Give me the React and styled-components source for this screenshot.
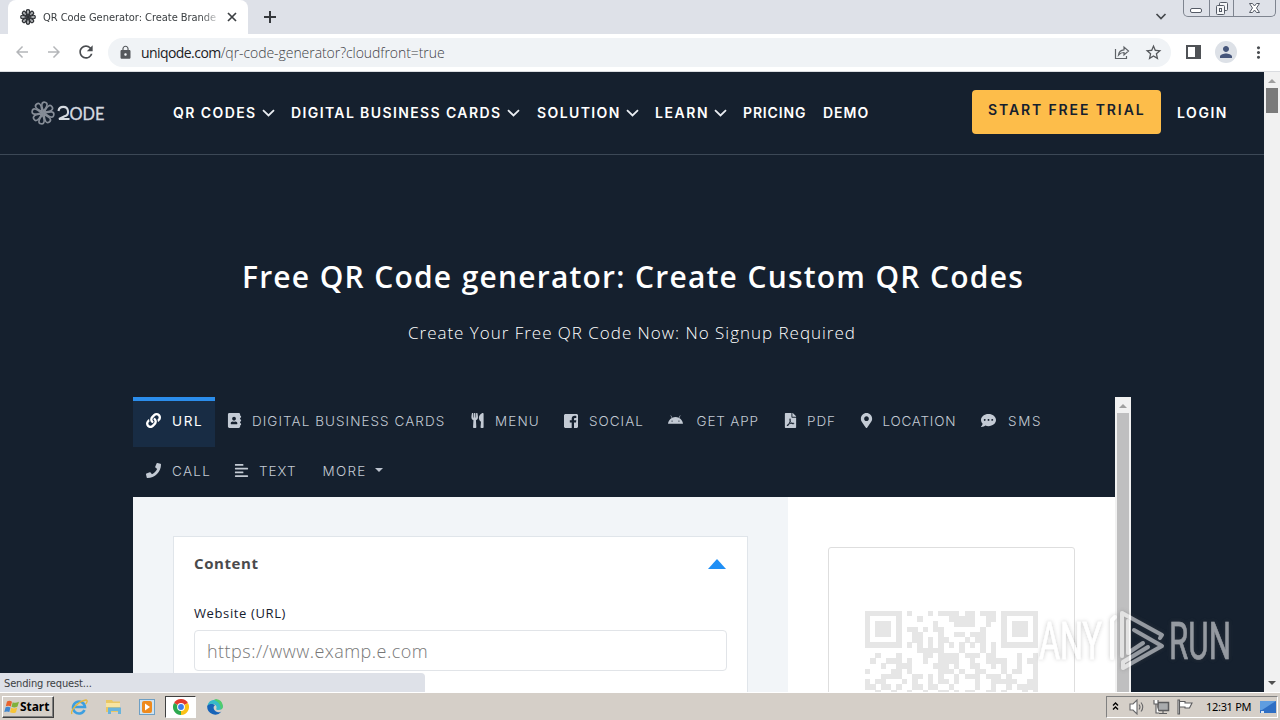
import React from "react";
import styled, { createGlobalStyle, css } from "styled-components";
import {
  FaLink, FaAddressBook, FaUtensils, FaAndroid, FaFilePdf,
  FaMapMarkerAlt, FaCommentDots, FaPhone, FaAlignLeft,
} from "react-icons/fa";
import { MdArrowBack, MdArrowForward, MdRefresh, MdLock, MdStarBorder, MdMoreVert, MdPerson } from "react-icons/md";

const navy = "#15202e";
const tahoma = `"DejaVu Sans Condensed", "DejaVu Sans", sans-serif`;

const Global = createGlobalStyle`
  * { box-sizing: border-box; }
  html, body { margin: 0; overflow: hidden; background: #fff; }
  svg { display: block; flex: none; }
`;

const Screen = styled.div`
  position: relative;
  width: 1280px;
  height: 720px;
  display: flex;
  flex-direction: column;
  overflow: hidden;
  font-family: Inter, sans-serif;
  white-space: nowrap;
`;

/* ---------- browser chrome ---------- */

const TabStrip = styled.div`
  height: 34px;
  flex: none;
  display: flex;
  align-items: flex-start;
  padding-left: 8px;
  background: #dee1e8;
`;

const BrowserTab = styled.div`
  width: 240px;
  height: 34px;
  display: flex;
  align-items: center;
  padding: 0 10px 0 12px;
  background: #fff;
  border-radius: 8px 8px 0 0;
`;

const TabTitle = styled.div`
  width: 176px;
  margin: 1px 8px 0 7px;
  font-family: ${tahoma};
  font-stretch: condensed;
  font-size: 11px;
  line-height: 16px;
  letter-spacing: -0.04px;
  color: #3c4043;
  mask-image: linear-gradient(to right, #000 90%, rgba(0, 0, 0, 0.1) 100%);
`;

const NewTab = styled.div`
  padding: 11px 0 0 16px;
`;

const TabSearch = styled.div`
  margin-left: auto;
  padding: 12px 16px 0 0;
`;

const WindowButtons = styled.div`
  display: flex;
  width: 93px;
  height: 17px;
  margin-right: 4px;
  border: 1px solid #7e848f;
  border-top: 0;
  border-radius: 0 0 5px 5px;
`;

const WindowButton = styled.div`
  width: ${(p) => p.$width}px;
  display: flex;
  justify-content: center;
  border-left: ${(p) => (p.$divided ? "1px solid #7e848f" : "0")};
`;

const Toolbar = styled.div`
  height: 38px;
  flex: none;
  display: flex;
  align-items: center;
  padding: 0 12px 1px 13px;
  background: #fff;
  border-bottom: 1px solid #dadce0;
`;

const NavButtons = styled.div`
  display: flex;
  align-items: center;
  gap: 14px;
  width: 95px;
`;

const NavGlyph = styled.span`
  color: ${(p) => (p.$active ? "#4a4d51" : "#b4b6b9")};
  margin-left: ${(p) => (p.$active ? -1 : 0)}px;
  font-size: 18px;
`;

const AddressBar = styled.div`
  width: 1064px;
  height: 29px;
  display: flex;
  align-items: center;
  padding: 0 8px 0 10px;
  border-radius: 15px;
  background: #f0f3f6;
  color: #55585c;
`;

const Url = styled.div`
  margin: 2px 0 0 8px;
  font: 400 14px/20px "Open Sans", sans-serif;
  letter-spacing: -0.56px;
  color: #202124;
`;

const UrlPath = styled.span`
  font-weight: 300;
  letter-spacing: -0.06px;
  color: #3f4246;
`;

const BarActions = styled.div`
  margin-left: auto;
  display: flex;
  align-items: center;
  gap: 14px;
`;

const ToolbarActions = styled.div`
  display: flex;
  align-items: center;
  margin-left: 15px;
  color: #4a4d51;
`;

const Avatar = styled.div`
  width: 22px;
  height: 22px;
  margin: 0 12px 0 14px;
  display: grid;
  place-items: center;
  border-radius: 50%;
  background: #dde1e7;
  color: #45557a;
  font-size: 18px;
`;

/* ---------- page ---------- */

const Viewport = styled.div`
  height: 620px;
  flex: none;
  display: flex;
`;

const Page = styled.main`
  width: 1264px;
  height: 620px;
  overflow: hidden;
  background: ${navy};
  color: #fff;
`;

const Scrollbar = styled.div`
  width: 16px;
  display: flex;
  flex-direction: column;
  align-items: center;
  background: #f1f1f1;
`;

const ScrollArrow = styled.div`
  width: 0;
  height: 0;
  border: 4px solid transparent;
  ${(p) =>
    p.$down
      ? css`border-top: 4px solid #505050; border-bottom: 0; margin: auto 0 7px;`
      : css`border-bottom: 4px solid #a0a0a0; border-top: 0; margin: 7px 0 5px;`}
`;

const ScrollThumb = styled.div`
  width: 12px;
  height: ${(p) => p.$height};
  background: ${(p) => p.$color};
`;

const Header = styled.header`
  height: 83px;
  display: flex;
  align-items: center;
  padding: 0 37px 2px 31px;
  border-bottom: 1px solid #3c4856;
`;

const Logo = styled.div`
  width: 142px;
  padding-top: 1px;
`;

const Menu = styled.nav`
  display: flex;
`;

const MenuLink = styled.a`
  width: ${(p) => p.$width}px;
  display: flex;
  align-items: center;
  gap: ${(p) => 6.5 - p.$spacing}px;
  padding-top: 2px;
  font-weight: 600;
  font-size: 14px;
  line-height: 20px;
  letter-spacing: ${(p) => p.$spacing}px;
`;

const Trial = styled.a`
  width: 189px;
  height: 44px;
  margin-left: auto;
  padding-left: 16px;
  border-radius: 4px;
  background: #fdbd4a;
  color: ${navy};
  font-weight: 600;
  font-size: 14px;
  line-height: 40px;
  letter-spacing: 1.88px;
`;

const Login = styled(MenuLink)`
  margin-left: 16px;
`;

const Title = styled.h1`
  margin: 101px 0 0;
  padding-left: 242px;
  font: 600 30px/42px "Open Sans", sans-serif;
  letter-spacing: 1.2px;
  word-spacing: 0.4px;
`;

const Subtitle = styled.p`
  margin: 23px 0 0;
  padding-left: 408px;
  font: 300 17px/24px "Open Sans", sans-serif;
  letter-spacing: 0.98px;
`;

const Frame = styled.section`
  width: 998px;
  height: 295px;
  margin: 52px 0 0 133px;
  display: flex;
`;

const Generator = styled.div`
  width: 982px;
`;

const Tabs = styled.div`
  height: 100px;
  display: flex;
  flex-wrap: wrap;
`;

const Tab = styled.div`
  width: ${(p) => p.$width}px;
  height: 50px;
  display: flex;
  align-items: center;
  padding: 0 0 6px 12.5px;
  border-top: 4px solid ${(p) => (p.$active ? "#2b8deb" : "transparent")};
  background: ${(p) => (p.$active ? "#182c44" : "transparent")};
  color: ${(p) => (p.$active ? "#fff" : "#c3cad4")};
`;

const TabIcon = styled.span`
  width: ${(p) => p.$width}px;

  svg {
    width: auto;
    height: 15px;
    margin: -1px 0 0 ${(p) => (p.$width < 26 ? -1 : 0)}px;
  }
`;

const TabLabel = styled.span`
  font-weight: ${(p) => (p.$active ? 400 : 300)};
  font-size: 13.5px;
  letter-spacing: ${(p) => p.$spacing}px;
`;

const Caret = styled.span`
  margin: -2px 0 0 8px;
  border: 4px solid transparent;
  border-top-color: #bcc3ce;
  border-bottom: 0;
`;

const Workspace = styled.div`
  height: 195px;
  display: flex;
  overflow: hidden;
`;

const FormPane = styled.div`
  width: 655px;
  padding: 39px 40px 0;
  background: #f2f5f8;
`;

const Card = styled.div`
  height: 200px;
  padding: 15px 20px 0;
  border: 1px solid #e0e5ea;
  background: #fff;
`;

const CardHead = styled.div`
  height: 24px;
  display: flex;
  align-items: center;
  justify-content: space-between;
  padding-right: 1px;
  font: 700 15px/24px "Open Sans", sans-serif;
  letter-spacing: 0.6px;
  color: #4a4a4c;
`;

const CardTitle = styled.span`
  padding-bottom: 2px;
`;

const Collapse = styled.span`
  border: 9px solid transparent;
  border-top: 0;
  border-bottom: 10px solid #1f8ff5;
`;

const FieldLabel = styled.label`
  display: block;
  margin-top: 27px;
  font: 400 13px/20px "Open Sans", sans-serif;
  letter-spacing: 0.62px;
  color: ${navy};
`;

const Field = styled.div`
  height: 41px;
  margin-top: 7px;
  padding-left: 12px;
  border: 1px solid #e1e4e8;
  border-radius: 4px;
  font: 300 18px/40px "Open Sans", sans-serif;
  letter-spacing: 0.48px;
  color: #777;
`;

const PreviewPane = styled.div`
  width: 327px;
  padding: 50px 0 0 40px;
  background: #fff;
`;

const QrBox = styled.div`
  width: 247px;
  height: 220px;
  padding: 63px 0 0 36px;
  border: 1px solid #dedede;
  border-radius: 3px;
`;

/* ---------- overlays ---------- */

const Status = styled.div`
  position: absolute;
  left: 0;
  top: 673px;
  width: 425px;
  height: 19px;
  padding-left: 4px;
  border-radius: 0 4px 0 0;
  background: #dee1e8;
  color: #3c4043;
  font-family: ${tahoma};
  font-stretch: condensed;
  font-size: 11px;
  line-height: 21px;
  letter-spacing: -0.15px;
`;

const Watermark = styled.div`
  position: absolute;
  left: 1030px;
  top: 604px;
`;

/* ---------- taskbar ---------- */

const Taskbar = styled.footer`
  height: 28px;
  flex: none;
  display: flex;
  align-items: center;
  padding: 1px 2px 0;
  border-top: 1px solid #fff;
  background: #d5cfc8;
`;

const Start = styled.div`
  width: 52px;
  height: 22px;
  display: flex;
  align-items: center;
  padding-left: 1px;
  border: 1px solid;
  border-color: #fff #404040 #404040 #fff;
  box-shadow: inset -1px -1px #808080;
  font: 700 12px/18px "Noto Sans", sans-serif;
  letter-spacing: -0.05px;
  color: #000;
`;

const Launchers = styled.div`
  display: flex;
  align-items: center;
  margin-left: 8px;
`;

const Launcher = styled.div`
  width: ${(p) => (p.$active ? 31 : 34)}px;
  height: 22px;
  margin: 0 ${(p) => (p.$active ? "2px 0 1px" : "0")};
  display: grid;
  place-items: center;
  border: 1px solid;
  border-color: ${(p) => (p.$active ? "#404040 #fff #fff #404040" : "transparent")};
  background: ${(p) => (p.$active ? "#fff" : "transparent")};
`;

const Tray = styled.div`
  width: 172px;
  height: 22px;
  margin-left: auto;
  display: flex;
  align-items: center;
  padding-left: 5px;
  border: 1px solid;
  border-color: #808080 #fff #fff #808080;
`;

const Clock = styled.span`
  width: 54px;
  margin-left: 13px;
  font: 400 11px/16px "Noto Sans", sans-serif;
  letter-spacing: -0.3px;
  color: #000;
`;

const TrayIcon = styled.span`
  width: ${(p) => p.$width}px;
`;

/* ---------- drawings ---------- */

const PETALS = [0, 45, 90, 135, 180, 225, 270, 315];

const Petals = ({ turn }) =>
  PETALS.map((a) => (
    <path key={a} transform={`rotate(${a + turn})`} d="M0-1.5C-1-4-2.6-6-2.6-8.4A2.6 2.6 0 0 1 2.6-8.4C2.6-6 1-4 0-1.5Z" />
  ));

const Flower = () => (
  <svg width="16" height="16" viewBox="-12 -12 24 24" fill="#a9acaf" stroke="#2b2e32" strokeWidth="1.8">
    <Petals turn={0} />
  </svg>
);

const Brand = () => (
  <svg width="76" height="26" viewBox="0 0 76 26">
    <g transform="translate(12 13)" fill="none" stroke="#868d97" strokeWidth="1.6">
      <Petals turn={10} />
    </g>
    <path d="M27.500 11A4.800 4.800 0 1 1 33.500 16.300L28 19H38.500" fill="none" stroke="#d5dae0" strokeWidth="2.100" />
    <text x="38.5" y="19.5" fontFamily="Lato, sans-serif" fontSize="17.5" fill="#d5dae0" stroke="#d5dae0" strokeWidth=".3" textLength="35" lengthAdjust="spacingAndGlyphs">ODE</text>
  </svg>
);

const Chevron = () => (
  <svg width="13" height="8" viewBox="0 0 13 8" fill="none" stroke="#e9edf2" strokeWidth="1.8">
    <path d="M1 1.200L6.500 6.500L12 1.200" />
  </svg>
);

const FacebookSquare = () => (
  <svg width="14" height="15" viewBox="0 0 14 15">
    <path fill="currentColor" fillRule="evenodd" d="M1 1H13L14 2V14L13 15H10V9.500H12L12.300 7.300H10V6C10 5.300 10.300 4.900 11.200 4.900H12.300V2.900C11.900 2.800 11.300 2.800 10.600 2.800C8.800 2.800 7.700 3.800 7.700 5.700V7.300H5.800V9.500H7.700V15H1L0 14V2Z" />
  </svg>
);

const QR = [
  "1111111 1   1 1111 11 111 1111111",
  "1     1   1     11111  11 1     1",
  "1 111 1      1   1111  1  1 111 1",
  "1 111 1 11 1 11       1   1 111 1",
  "1 111 1  11   1  11 111   1 111 1",
  "1     1  11 1 11   1 11   1     1",
  "1111111 1 1 1 1 1 1 1 1 1 1111111",
  "          11111   1   1 1        ",
  "  1   1    11 1111 111 11    1  1",
  " 1  111 1  1  1111  1  1111  1 11",
  "   1  111    111 1  11  1 1  1  1",
  "1    11 1     111 1  11   1 11  1",
  "   1111  11 1 1  1 111 111 1    1",
  "1 11   1 1  1 11 1   1  11111  11",
  "11 11 1  11 11  1    1  1  1 1111",
  "  1  1  1  1  11 1 11  11 1   1 1",
];

const QrCode = () => (
  <svg width="174" height="84" viewBox="0 0 33.2 16.03" fill="#e6e6e6" shapeRendering="crispEdges">
    {QR.map((row, y) =>
      [...row].map((cell, x) => (cell === "1" ? <rect key={`${x}-${y}`} x={x} y={y} width="1.02" height="1.02" /> : null))
    )}
  </svg>
);

const AnyRun = () => (
  <svg width="220" height="76" viewBox="0 0 220 76">
    <defs>
      <filter id="soft" x="-10%" y="-20%" width="120%" height="140%">
        <feDropShadow dx="0" dy="0" stdDeviation="2" floodColor="#555" floodOpacity=".6" />
      </filter>
    </defs>
    <g filter="url(#soft)" fill="#fff" opacity=".55" fontFamily="Roboto, sans-serif" fontSize="51">
      <text x="9" y="55" stroke="#fff" strokeWidth=".6" textLength="63" lengthAdjust="spacingAndGlyphs">ANY</text>
      <text x="139" y="55" stroke="#fff" strokeWidth=".6" textLength="62" lengthAdjust="spacingAndGlyphs">RUN</text>
      <g fill="none" stroke="#fff" strokeWidth="4" strokeLinejoin="round" strokeLinecap="round">
        <path d="M82 54V16L85 13" />
        <path d="M92 52V9L132 31L130 34" />
        <path d="M98 17V49L113 39" />
        <path d="M104 26L132 42L93 64V58L118 43" />
      </g>
    </g>
  </svg>
);

const TABS = [
  { label: "URL", icon: <FaLink />, width: 82, iconWidth: 26.5, ls: 1.6, active: true },
  { label: "DIGITAL BUSINESS CARDS", icon: <FaAddressBook />, width: 243, iconWidth: 24.5, ls: 1.05 },
  { label: "MENU", icon: <FaUtensils />, width: 94, iconWidth: 24.5, ls: 1.1 },
  { label: "SOCIAL", icon: <FacebookSquare />, width: 103.5, iconWidth: 24.5, ls: 1 },
  { label: "GET APP", icon: <FaAndroid />, width: 115.5, iconWidth: 28.5, ls: 0.85 },
  { label: "PDF", icon: <FaFilePdf />, width: 76, iconWidth: 23.5, ls: 0.9 },
  { label: "LOCATION", icon: <FaMapMarkerAlt />, width: 121.5, iconWidth: 23, ls: 0.75 },
  { label: "SMS", icon: <FaCommentDots />, width: 84, iconWidth: 27, ls: 1.6 },
  { label: "CALL", icon: <FaPhone />, width: 89, iconWidth: 26.5, ls: 1.3 },
  { label: "TEXT", icon: <FaAlignLeft />, width: 88, iconWidth: 24.5, ls: 1 },
  { label: "MORE", width: 90, ls: 1.25, caret: true },
];

const MENU = [
  ["QR CODES", 118, 1.42, true],
  ["DIGITAL BUSINESS CARDS", 246, 1.39, true],
  ["SOLUTION", 118, 1.4, true],
  ["LEARN", 88, 1.55, true],
  ["PRICING", 80, 0.85],
  ["DEMO", 50, 1],
];

export default function App() {
  return (
    <Screen>
      <Global />
      <TabStrip>
        <BrowserTab>
          <Flower />
          <TabTitle>QR Code Generator: Create Brande</TabTitle>
          <svg width="10" height="10" viewBox="0 0 10 10" stroke="#3c4043" strokeWidth="1.700"><path d="M1 1l8 8M9 1L1 9" /></svg>
        </BrowserTab>
        <NewTab>
          <svg width="12" height="12" viewBox="0 0 12 12" stroke="#35383c" strokeWidth="2"><path d="M6 0v12M0 6h12" /></svg>
        </NewTab>
        <TabSearch>
          <svg width="12" height="9" viewBox="0 0 12 9" fill="none" stroke="#45484c" strokeWidth="1.700"><path d="M1.500 2L6 6.500L10.500 2" /></svg>
        </TabSearch>
        <WindowButtons>
          <WindowButton $width={25}>
            <svg width="13" height="16" fill="#fff" stroke="#555b66"><rect x=".5" y="8.500" width="11" height="4" rx="1.500" /></svg>
          </WindowButton>
          <WindowButton $width={25} $divided>
            <svg width="14" height="16" fill="#f4f5f7" stroke="#555b66"><rect x="4.500" y="2.500" width="8" height="8" rx="1" /><rect x="1.500" y="5.500" width="8" height="9" rx="1" /><rect x="4.500" y="8.500" width="2" height="3" /></svg>
          </WindowButton>
          <WindowButton $width={42} $divided>
            <svg width="13" height="16" fill="#fff" stroke="#555b66"><path d="M1.500 3.500H4.500L6.500 6L8.500 3.500H11.500L8.500 8L11.500 12.500H8.500L6.500 10L4.500 12.500H1.500L4.500 8Z" /></svg>
          </WindowButton>
        </WindowButtons>
      </TabStrip>

      <Toolbar>
        <NavButtons>
          <NavGlyph><MdArrowBack /></NavGlyph>
          <NavGlyph><MdArrowForward /></NavGlyph>
          <NavGlyph $active><MdRefresh size={20} /></NavGlyph>
        </NavButtons>
        <AddressBar>
          <MdLock size={15} />
          <Url>uniqode.com<UrlPath>/qr-code-generator?cloudfront=true</UrlPath></Url>
          <BarActions>
            <svg width="16" height="15" viewBox="0 0 16 15" fill="none" stroke="#5f6368" strokeWidth="1.200"><path d="M1.500 4V13.500H12.500V11M4.500 10C5 6.500 7 5 10 4.800V2L14.500 6L10 10V7.500C7.500 7.500 6 8.200 4.500 10Z" /></svg>
            <MdStarBorder size={19} />
          </BarActions>
        </AddressBar>
        <ToolbarActions>
          <svg width="15" height="14" viewBox="0 0 15 14"><path fill="#4f5256" fillRule="evenodd" d="M0 0H15V14H0ZM2 2V12H9V2Z" /></svg>
          <Avatar><MdPerson /></Avatar>
          <MdMoreVert size={19} />
        </ToolbarActions>
      </Toolbar>

      <Viewport>
        <Page>
          <Header>
            <Logo><Brand /></Logo>
            <Menu>
              {MENU.map(([label, width, spacing, open]) => (
                <MenuLink key={label} $width={width} $spacing={spacing}>{label}{open && <Chevron />}</MenuLink>
              ))}
            </Menu>
            <Trial>START FREE TRIAL</Trial>
            <Login $width={50} $spacing={1.55}>LOGIN</Login>
          </Header>
          <Title>Free QR Code generator: Create Custom QR Codes</Title>
          <Subtitle>Create Your Free QR Code Now: No Signup Required</Subtitle>
          <Frame>
            <Generator>
              <Tabs>
                {TABS.map((t) => (
                  <Tab key={t.label} $width={t.width} $active={t.active}>
                    {t.icon && <TabIcon $width={t.iconWidth}>{t.icon}</TabIcon>}
                    <TabLabel $spacing={t.ls} $active={t.active}>{t.label}</TabLabel>
                    {t.caret && <Caret />}
                  </Tab>
                ))}
              </Tabs>
              <Workspace>
                <FormPane>
                  <Card>
                    <CardHead><CardTitle>Content</CardTitle><Collapse /></CardHead>
                    <FieldLabel>Website (URL)</FieldLabel>
                    <Field>https://www.examp.e.com</Field>
                  </Card>
                </FormPane>
                <PreviewPane>
                  <QrBox><QrCode /></QrBox>
                </PreviewPane>
              </Workspace>
            </Generator>
            <Scrollbar>
              <ScrollArrow />
              <ScrollThumb $height="100%" $color="#bfbfc0" />
            </Scrollbar>
          </Frame>
        </Page>
        <Scrollbar>
          <ScrollArrow />
          <ScrollThumb $height="25px" $color="#7b7b7b" />
          <ScrollArrow $down />
        </Scrollbar>
      </Viewport>

      <Taskbar>
        <Start>
          <svg width="16" height="16" viewBox="0 0 16 16">
            <path fill="#e8622c" d="M3 2.500C5 1.300 6.500 1.800 8 2.800L6.800 7.500C5.300 6.500 3.700 6.300 1.800 7.200Z" />
            <path fill="#7fb13c" d="M8.700 3.200C10.500 4.200 12.500 4 15 2.700L13.500 7.500C11.500 8.700 9.500 8.700 7.500 7.800Z" />
            <path fill="#3f86cf" d="M1.600 8.200C3.300 7.300 5 7.500 6.500 8.500L5.300 13C3.800 12.200 2.200 12.200.3 13Z" />
            <path fill="#f7c437" d="M7.200 8.800C9.200 9.800 11.200 9.500 13.200 8.500L12 13.200C10 14.500 8 14.300 6 13.300Z" />
          </svg>
          Start
        </Start>
        <Launchers>
          <Launcher>
            <svg width="18" height="18" viewBox="0 0 18 18" fill="none"><path d="M14.500 12A6 6 0 1 1 15 9H5" stroke="#3d9fe0" strokeWidth="2.600" /><path d="M2 16C0 13 8 3 16 2C18 2 17 5 15.500 6" stroke="#e5b73b" strokeWidth="1.300" /></svg>
          </Launcher>
          <Launcher>
            <svg width="17" height="16" viewBox="0 0 17 16"><path fill="#e9c765" d="M1 1H7L8 2.500H15V13H1Z" /><path fill="#f7e4a1" d="M1 4H15V8H1Z" /><path fill="#69b4dc" d="M3 8.500H16V15H13V12H6V15H3Z" /></svg>
          </Launcher>
          <Launcher>
            <svg width="16" height="16" viewBox="0 0 16 16"><rect x=".5" y=".5" width="15" height="15" fill="#cfe3f1" stroke="#6e9fc4" /><rect x="3" y="2" width="10" height="12" rx="2" fill="#ee8a1d" /><path fill="#fff" d="M6 4.500L11 8L6 11.500Z" /></svg>
          </Launcher>
          <Launcher $active>
            <svg width="16" height="16" viewBox="0 0 16 16">
              <path fill="#e33b2e" d="M8 8L1.070 4A8 8 0 0 1 14.930 4Z" />
              <path fill="#fbc116" d="M8 8L14.930 4A8 8 0 0 1 8 16Z" />
              <path fill="#2da94f" d="M8 8L8 16A8 8 0 0 1 1.070 4Z" />
              <circle cx="8" cy="8" r="3.900" fill="#fff" /><circle cx="8" cy="8" r="2.900" fill="#3b7ded" />
            </svg>
          </Launcher>
          <Launcher>
            <svg width="16" height="16" viewBox="0 0 16 16">
              <path fill="#36b9c9" d="M.3 7A8 8 0 0 1 15.900 7C16 9.500 14 11 11 11C9 11 9 10 9.500 9C10 7 8 5 5.500 5C3 5 1 6 .3 7Z" />
              <path fill="#1763b8" d="M.2 7C2 4.500 6.500 4.500 8 6.500C6 7 5.500 12 11 13.300C12.500 13.500 13.800 13 14.500 12.500A8 8 0 0 1 .2 7Z" />
              <path fill="#52cc6b" d="M9 .1A8 8 0 0 1 15.900 7C16 9 15 10.200 13.500 10.700C14 6 12 3 7 1Z" />
            </svg>
          </Launcher>
        </Launchers>
        <Tray>
          <TrayIcon $width={17}>
            <svg width="8" height="12" viewBox="0 0 8 12" fill="none" stroke="#000" strokeWidth="1.400"><path d="M1 4.500L3.500 2L6 4.500M1 8.500L3.500 6L6 8.500" /></svg>
          </TrayIcon>
          <TrayIcon $width={24}>
            <svg width="17" height="16" viewBox="0 0 17 16" fill="#fff" stroke="#68686a" strokeWidth="1.100"><path d="M1 5H4L8 1V15L4 11H1Z" /><path fill="none" d="M10 5.500Q12 8 10 10.500M12 3.500Q15.500 8 12 12.500" /></svg>
          </TrayIcon>
          <TrayIcon $width={24}>
            <svg width="17" height="16" viewBox="0 0 17 16" fill="#fff" stroke="#5c5c5e" strokeWidth="1.100"><rect x="5" y="3.500" width="10.500" height="8" fill="#a9abad" strokeWidth="1.500" /><path d="M1 1V5H5V1M3 5V14H6M6 14.500H14M10 12V14" /></svg>
          </TrayIcon>
          <TrayIcon $width={16}>
            <svg width="16" height="16" viewBox="0 0 16 16" fill="#fff" stroke="#5c5c5e" strokeWidth="1.100"><path d="M1 1H2.500V15H1ZM2.500 2.500H8V4H15L12.500 9H8V8H2.500Z" /></svg>
          </TrayIcon>
          <Clock>12:31 PM</Clock>
          <svg width="16" height="13" viewBox="0 0 16 13"><rect width="16" height="12" fill="#2f6fc4" /><path fill="#5f9de0" d="M0 0H16L2 9H0Z" /><path fill="#dbe7f5" d="M1 10H4V12H1Z" /></svg>
        </Tray>
      </Taskbar>

      <Status>Sending request...</Status>
      <Watermark><AnyRun /></Watermark>
    </Screen>
  );
}
